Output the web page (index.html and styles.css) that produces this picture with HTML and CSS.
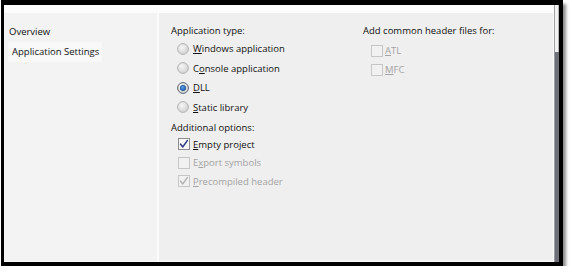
FILE: index.html
```html
<!DOCTYPE html>
<html lang="en">
<head>
<meta charset="utf-8">
<title>Application Settings</title>
<link rel="stylesheet" href="styles.css">
</head>
<body>
<svg class="defs" width="0" height="0" aria-hidden="true">
  <defs>
    <radialGradient id="rg" cx="0.4" cy="0.35" r="0.7">
      <stop offset="0" stop-color="#f6f6f6"/>
      <stop offset="1" stop-color="#cfcfcf"/>
    </radialGradient>
    <radialGradient id="rb" cx="0.4" cy="0.35" r="0.7">
      <stop offset="0" stop-color="#5aa0ea"/>
      <stop offset="1" stop-color="#1d5fb4"/>
    </radialGradient>
  </defs>
</svg>
<div class="frame">
  <div class="inner">
    <div class="band"></div>
    <div class="main">
      <nav class="nav">
        <div class="nav-item">Overview</div>
        <div class="nav-item active">Application Settings</div>
      </nav>
      <div class="sep"></div>
      <section class="content">
        <div class="col col-left">
          <div class="heading">Application type:</div>
          <div class="row radio-row">
            <svg class="radio" width="12" height="12" viewBox="0 0 12 12"><circle cx="6" cy="6" r="5.4" class="r-out"/></svg>
            <span><u>W</u>indows application</span>
          </div>
          <div class="row radio-row">
            <svg class="radio" width="12" height="12" viewBox="0 0 12 12"><circle cx="6" cy="6" r="5.4" class="r-out"/></svg>
            <span>C<u>o</u>nsole application</span>
          </div>
          <div class="row radio-row">
            <svg class="radio" width="12" height="12" viewBox="0 0 12 12"><circle cx="6" cy="6" r="5.4" class="r-out sel"/><circle cx="6" cy="6" r="2.7" class="r-dot"/></svg>
            <span><u>D</u>LL</span>
          </div>
          <div class="row radio-row">
            <svg class="radio" width="12" height="12" viewBox="0 0 12 12"><circle cx="6" cy="6" r="5.4" class="r-out"/></svg>
            <span><u>S</u>tatic library</span>
          </div>
          <div class="heading heading-2">Additional options:</div>
          <div class="row check-row">
            <svg class="check" width="12" height="12" viewBox="0 0 12 12"><rect x="0.5" y="0.5" width="11" height="11" class="c-box"/><path d="M2.6 6.2 L4.8 8.9 L9.3 2.6" class="c-mark"/></svg>
            <span><u>E</u>mpty project</span>
          </div>
          <div class="row check-row disabled">
            <svg class="check" width="12" height="12" viewBox="0 0 12 12"><rect x="0.5" y="0.5" width="11" height="11" class="c-box"/></svg>
            <span>E<u>x</u>port symbols</span>
          </div>
          <div class="row check-row disabled">
            <svg class="check" width="12" height="12" viewBox="0 0 12 12"><rect x="0.5" y="0.5" width="11" height="11" class="c-box"/><path d="M2.6 6.2 L4.8 8.9 L9.3 2.6" class="c-mark"/></svg>
            <span><u>P</u>recompiled header</span>
          </div>
        </div>
        <div class="col col-right">
          <div class="heading">Add common header files for:</div>
          <div class="row hdr-row disabled first">
            <svg class="check" width="12" height="12" viewBox="0 0 12 12"><rect x="0.5" y="0.5" width="11" height="11" class="c-box"/></svg>
            <span><u>A</u>TL</span>
          </div>
          <div class="row hdr-row disabled">
            <svg class="check" width="12" height="12" viewBox="0 0 12 12"><rect x="0.5" y="0.5" width="11" height="11" class="c-box"/></svg>
            <span><u>M</u>FC</span>
          </div>
        </div>
      </section>
    </div>
  </div>
  <div class="scroll">
    <div class="thumb"></div>
    <div class="track"></div>
  </div>
</div>
</body>
</html>
```
FILE: styles.css
```css
html, body {
  margin: 0;
  background: #ffffff;
}
body {
  font-family: "Open Sans", "Noto Sans", sans-serif;
  font-size: 9.5px;
  color: #111111;
}
.defs {
  position: absolute;
  width: 0;
  height: 0;
}
.frame {
  display: flex;
  width: 555px;
  height: 257px;
  margin-left: 1px;
  border-style: solid;
  border-color: #000;
  border-width: 5px 4px 4px 3px;
  box-shadow: 3px 4px 3px rgba(0, 0, 0, 0.45);
}
.inner {
  flex: 1;
  display: flex;
  flex-direction: column;
}
.band {
  height: 8px;
  background: #fcfcfc;
}
.main {
  flex: 1;
  display: flex;
  border-bottom: 1px solid #f8f8f8;
}
.nav {
  width: 153px;
  box-sizing: border-box;
  padding: 9px 0 0 4px;
  background: #f3f3f3;
}
.nav-item {
  height: 20px;
  line-height: 20px;
  padding-left: 1px;
  white-space: nowrap;
}
.nav-item.active {
  width: 94px;
  box-sizing: border-box;
  padding-left: 4px;
  background: #f8f8f9;
}
.sep {
  width: 2px;
  background: #fbfbfb;
}
.content {
  flex: 1;
  display: flex;
  padding: 10px 0 0 12px;
  background: #efefef;
}
.col-left {
  width: 192px;
}
.heading {
  height: 16px;
  line-height: 16px;
  white-space: nowrap;
}
.heading-2 {
  margin-top: 3px;
  height: 15px;
  line-height: 15px;
}
.row {
  display: flex;
  align-items: center;
  white-space: nowrap;
}
.radio-row {
  height: 19.5px;
}
.radio-row .radio {
  margin: 0 4px 0 6px;
}
.check-row {
  height: 18.5px;
}
.check-row .check {
  margin: 0 3px 0 7px;
}
.hdr-row {
  height: 19px;
}
.hdr-row.first {
  margin-top: 2px;
}
.hdr-row .check {
  margin: 0 2px 0 8px;
}
u {
  text-decoration: underline;
  text-underline-offset: 1px;
}
.row svg {
  flex: none;
  display: block;
}
.r-out {
  fill: url(#rg);
  stroke: #b3b3b3;
  stroke-width: 1;
}
.r-out.sel {
  stroke: #5a6470;
}
.r-dot {
  fill: url(#rb);
  stroke: #1b4a8a;
  stroke-width: 0.7;
}
.c-box {
  fill: #f8f8f8;
  stroke: #8c8c8c;
  stroke-width: 1;
}
.c-mark {
  fill: none;
  stroke: #2e3b82;
  stroke-width: 1.6;
  stroke-linecap: round;
  stroke-linejoin: round;
}
.disabled {
  color: #a3a3a3;
}
.disabled .c-box {
  fill: #f1f1f1;
  stroke: #c6c6c6;
}
.disabled .c-mark {
  stroke: #b4b4b4;
}
.scroll {
  width: 5px;
  border-left: 1px solid #fafafa;
  display: flex;
  flex-direction: column;
}
.thumb {
  height: 47px;
  background: linear-gradient(to right, #a0a0a0 0 1px, #f2f2f2 1px 4px, #b5b5b5 4px);
}
.track {
  flex: 1;
  background: linear-gradient(to right, #9a9da3 0 1px, #6d7077 1px);
}
```
